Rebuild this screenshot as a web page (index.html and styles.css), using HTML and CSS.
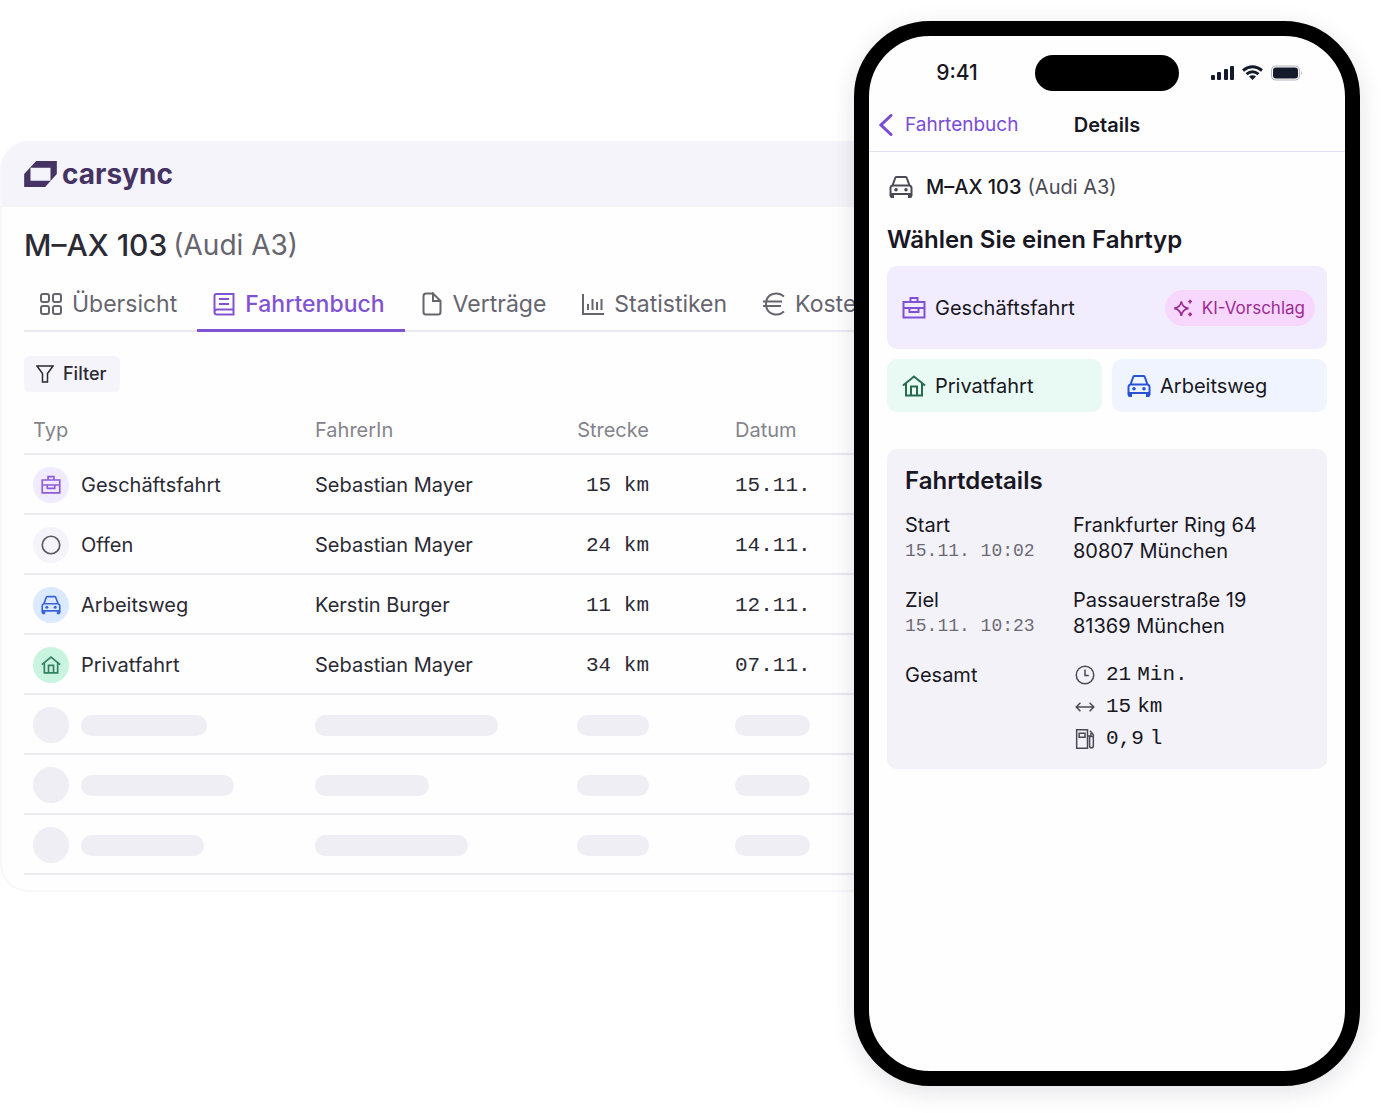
FILE: index.html
```html
<!DOCTYPE html>
<html lang="de">
<head>
<meta charset="utf-8">
<meta name="viewport" content="width=device-width, initial-scale=1">
<title>carsync Fahrtenbuch</title>
<link rel="stylesheet" href="styles.css">
</head>
<body>
<svg class="sprite" aria-hidden="true">
  <symbol id="grid" viewBox="0 0 24 24"><rect x="2" y="2" width="8" height="8" rx="2"/><rect x="14" y="2" width="8" height="8" rx="2"/><rect x="2" y="14" width="8" height="8" rx="2"/><rect x="14" y="14" width="8" height="8" rx="2"/></symbol>
  <symbol id="book" viewBox="0 0 24 24"><path d="M21.500 17.500V2H4.500Q2.500 2 2.500 4V20Q2.500 22.500 5 22.500H21.500V17.500H5Q2.500 17.500 2.500 20M7 7H17M7 12H17"/></symbol>
  <symbol id="file" viewBox="0 0 24 24"><path d="M13 1.500H6Q3.500 1.500 3.500 4V20Q3.500 22.500 6 22.500H18Q20.500 22.500 20.500 20V9L13 1.500V9H20.500"/></symbol>
  <symbol id="chart" viewBox="0 0 24 24"><path d="M2 2V22H23M7 18V12M11.500 18V7M16 18V10M20.500 18V7"/></symbol>
  <symbol id="euro" viewBox="0 0 24 24"><path d="M22 4.500C16 -1 4 1 4 12S16 25 22 19.500M1 9.500H20M1 14H19"/></symbol>
  <symbol id="funnel" viewBox="0 0 18 18"><path d="M1 1H17L11.500 8.500V17H6.500V8.500Z"/></symbol>
  <symbol id="briefcase" viewBox="0 0 24 24"><path d="M1.500 6H22.500V21.500H1.500ZM8.500 6V2H15.500V6M1.500 12H22.500M7.500 12V16H16.500V12"/></symbol>
  <symbol id="car" viewBox="0 0 24 24"><path d="M1.500 21V13Q1.500 11 3.500 10.500L6 3.500Q6.300 2 7.500 2H16.500Q17.700 2 18 3.500L20.500 10.500Q22.500 11 22.500 13V21M3 10.500H21M1.500 19H22.500"/><path class="fill" d="M1 19H5V23H2.500Q1 23 1 21.500ZM19 19H23V21.500Q23 23 21.500 23H19Z"/><circle class="fill" cx="7" cy="14.800" r="1.800"/><circle class="fill" cx="17" cy="14.800" r="1.800"/></symbol>
  <symbol id="home" viewBox="0 0 24 24"><path d="M1 11.500L12 2.500L23 11.500M4 9.500V21.500H20V9.500M9 21.500V12.500H15V21.500"/></symbol>
  <symbol id="ring" viewBox="0 0 24 24"><circle cx="12" cy="12" r="10.500"/></symbol>
  <symbol id="spark" viewBox="0 0 24 24"><path d="M10 4Q11 11 18.500 12.500Q11 14 10 21.500Q9 14 1.500 12.500Q9 11 10 4Z"/><path d="M20.500 2V6.500M18.300 4.200H22.800M20.500 17.500V22M18.300 19.700H22.800"/></symbol>
  <symbol id="clock" viewBox="0 0 24 24"><circle cx="12" cy="12" r="10.500"/><path d="M12 5.500V12.500H16.500"/></symbol>
  <symbol id="span" viewBox="0 0 24 24"><path d="M2 12H22M6.500 7L1.500 12L6.500 17M17.500 7L22.500 12L17.500 17"/></symbol>
  <symbol id="pump" viewBox="0 0 24 24"><path d="M2 1H15V23H2ZM5 5H12V10H5ZM15 8.500H17.500V20Q17.500 22.500 19.700 22.500Q22 22.500 22 20V7L18 2M22 9H19V5"/></symbol>
  <symbol id="back" viewBox="0 0 14 22"><path d="M12 1.500L2 11L12 20.500"/></symbol>
</svg>

<main class="stage">
  <section class="window">
    <header class="brand">
      <svg class="brand-mark" viewBox="0 0 98 78" aria-hidden="true"><path fill-rule="evenodd" d="M0 78V39L36 0H98V39L63 78ZM19 20V59H79V20Z"/></svg>
      <span class="brand-name">carsync</span>
    </header>
    <div class="window-body">
      <h1 class="title"><strong>M–AX 103</strong><span>(Audi A3)</span></h1>
      <nav class="tabs">
        <a class="tab" href="#uebersicht"><svg class="icon"><use href="#grid"/></svg>Übersicht</a>
        <a class="tab active" href="#fahrtenbuch"><svg class="icon"><use href="#book"/></svg>Fahrtenbuch</a>
        <a class="tab" href="#vertraege"><svg class="icon"><use href="#file"/></svg>Verträge</a>
        <a class="tab" href="#statistiken"><svg class="icon"><use href="#chart"/></svg>Statistiken</a>
        <a class="tab" href="#kosten"><svg class="icon"><use href="#euro"/></svg>Kosten</a>
      </nav>
      <button class="filter" type="button"><svg class="icon"><use href="#funnel"/></svg>Filter</button>
      <table class="trips">
        <thead>
          <tr><th class="col-type">Typ</th><th class="col-driver">FahrerIn</th><th class="col-distance">Strecke</th><th>Datum</th></tr>
        </thead>
        <tbody>
          <tr><td><span class="type"><span class="dot business"><svg class="icon"><use href="#briefcase"/></svg></span>Geschäftsfahrt</span></td><td>Sebastian Mayer</td><td class="mono">15 km</td><td class="mono">15.11.</td></tr>
          <tr><td><span class="type"><span class="dot open"><svg class="icon"><use href="#ring"/></svg></span>Offen</span></td><td>Sebastian Mayer</td><td class="mono">24 km</td><td class="mono">14.11.</td></tr>
          <tr><td><span class="type"><span class="dot commute"><svg class="icon"><use href="#car"/></svg></span>Arbeitsweg</span></td><td>Kerstin Burger</td><td class="mono">11 km</td><td class="mono">12.11.</td></tr>
          <tr><td><span class="type"><span class="dot private"><svg class="icon"><use href="#home"/></svg></span>Privatfahrt</span></td><td>Sebastian Mayer</td><td class="mono">34 km</td><td class="mono">07.11.</td></tr>
          <tr><td><span class="type"><span class="dot empty"></span><span class="bar" style="width:126px"></span></span></td><td><span class="bar" style="width:183px"></span></td><td><span class="bar bar-end" style="width:72px"></span></td><td><span class="bar" style="width:75px"></span></td></tr>
          <tr><td><span class="type"><span class="dot empty"></span><span class="bar" style="width:153px"></span></span></td><td><span class="bar" style="width:114px"></span></td><td><span class="bar bar-end" style="width:72px"></span></td><td><span class="bar" style="width:75px"></span></td></tr>
          <tr><td><span class="type"><span class="dot empty"></span><span class="bar" style="width:123px"></span></span></td><td><span class="bar" style="width:153px"></span></td><td><span class="bar bar-end" style="width:72px"></span></td><td><span class="bar" style="width:75px"></span></td></tr>
        </tbody>
      </table>
    </div>
  </section>

  <section class="phone">
    <div class="status">
      <span class="time">9:41</span>
      <span class="island"></span>
      <span class="signals">
        <svg width="92" height="18" viewBox="0 0 92 18" aria-hidden="true">
          <rect x="0" y="11" width="4" height="5" rx="1"/><rect x="6" y="8" width="4" height="8" rx="1"/><rect x="13" y="5" width="4" height="11" rx="1"/><rect x="19" y="2" width="4" height="14" rx="1"/>
          <path class="wave" d="M32 6.500Q41.500 -1 51 6.500M35.500 10.200Q41.500 5.300 47.500 10.200"/><path d="M38 12.500Q41.500 9.800 45 12.500L41.500 16Z"/>
          <rect class="shell" x="60.500" y="2" width="28" height="14" rx="4"/><rect x="62" y="3.500" width="25" height="11" rx="3"/><path class="nub" d="M90 7Q92 9 90 11Z"/>
        </svg>
      </span>
    </div>
    <nav class="phone-nav">
      <a class="back" href="#liste"><svg class="chevron"><use href="#back"/></svg>Fahrtenbuch</a>
      <h2 class="nav-title">Details</h2>
    </nav>
    <div class="phone-body">
      <p class="vehicle"><svg class="icon"><use href="#car"/></svg><span class="vehicle-name"><strong>M–AX 103</strong><span>(Audi A3)</span></span></p>
      <h3 class="heading">Wählen Sie einen Fahrtyp</h3>
      <div class="choices">
        <button class="choice choice-business" type="button"><svg class="icon"><use href="#briefcase"/></svg>Geschäftsfahrt<span class="badge"><svg class="icon"><use href="#spark"/></svg>KI-Vorschlag</span></button>
        <button class="choice choice-private" type="button"><svg class="icon"><use href="#home"/></svg>Privatfahrt</button>
        <button class="choice choice-commute" type="button"><svg class="icon"><use href="#car"/></svg>Arbeitsweg</button>
      </div>
      <section class="details">
        <h3 class="heading">Fahrtdetails</h3>
        <dl class="facts">
          <dt>Start<time class="mono">15.11. 10:02</time></dt>
          <dd>Frankfurter Ring 64<br>80807 München</dd>
          <dt>Ziel<time class="mono">15.11. 10:23</time></dt>
          <dd>Passauerstraße 19<br>81369 München</dd>
          <dt>Gesamt</dt>
          <dd class="totals">
            <span class="total mono"><svg class="icon"><use href="#clock"/></svg><span>21</span><span>Min.</span></span>
            <span class="total mono"><svg class="icon"><use href="#span"/></svg><span>15</span><span>km</span></span>
            <span class="total mono"><svg class="icon"><use href="#pump"/></svg><span>0,9</span><span>l</span></span>
          </dd>
        </dl>
      </section>
    </div>
  </section>
</main>
</body>
</html>
```
FILE: styles.css
```css
* { box-sizing: border-box; }

body {
  margin: 0;
  background: #fff;
  color: #2b2a35;
  font-family: Inter, "Liberation Sans", sans-serif;
  font-size: 20px;
  line-height: 26px;
}

h1, h2, h3, p, dl, dd { margin: 0; }
a { color: inherit; text-decoration: none; }
button { border: 0; font: inherit; color: inherit; text-align: left; }
strong { font-weight: 500; }

.sprite { display: none; }
.icon {
  flex: none;
  width: 24px;
  height: 24px;
  fill: none;
  stroke: currentColor;
  stroke-width: 2;
}
.fill { fill: currentColor; stroke: none; }
.mono { font-family: "Liberation Mono", monospace; font-size: 21px; }

.stage {
  display: grid;
  grid-template-columns: minmax(0, 1fr) 506px;
  min-height: 100vh;
  padding: 21px 25px 27px 0;
}

/* Desktop window, runs behind the phone's left edge */
.window {
  align-self: start;
  margin: 120px -40px 0 0;
  overflow: hidden;
  border: 1px solid #f7f6fb;
  border-width: 0 0 2px 2px;
  border-radius: 28px 0 0 28px;
  background: #fefefe;
}
.brand {
  display: flex;
  align-items: center;
  gap: 5px;
  height: 66px;
  padding-left: 22px;
  background: #f5f4fa;
  color: #453363;
}
.brand-mark { width: 33px; height: 26px; fill: currentColor; }
.brand-name { font-size: 28px; font-weight: 700; }
.window-body { padding: 20px 0 15px 22px; }

.title {
  display: flex;
  gap: 6px;
  font-size: 30px;
  font-weight: 400;
  line-height: 36px;
}
.title span { color: #66656e; font-size: 28px; }

.tabs {
  display: flex;
  margin-top: 16px;
  border-bottom: 2px solid #e9e9f1;
  color: #66656e;
  font-size: 23px;
  white-space: nowrap;
}
.tab {
  display: flex;
  align-items: center;
  gap: 9px;
  height: 53px;
  margin-bottom: -2px;
  padding: 0 20px 0 15px;
  border-bottom: 3px solid transparent;
}
.tab.active { border-color: #8153d3; color: #8153d3; font-weight: 500; }

.filter {
  display: flex;
  align-items: center;
  gap: 9px;
  height: 36px;
  margin-top: 24px;
  padding: 0 14px 0 12px;
  border-radius: 6px;
  background: #f5f4fa;
  font-size: 18px;
  font-weight: 500;
}
.filter .icon { width: 18px; height: 18px; stroke-width: 1.5; }

.trips {
  width: 100%;
  margin-top: 13px;
  border-collapse: collapse;
  table-layout: fixed;
}
.trips tr { height: 60px; border-bottom: 2px solid #e9e9f0; }
.trips thead tr { height: 49px; }
.trips th { color: #84848c; font-weight: 400; text-align: left; }
.trips th, .trips td { padding: 2px 0 0 9px; }
.col-type { width: 282px; }
.col-driver { width: 220px; }
.col-distance { width: 200px; }
.trips th:nth-child(3), .trips td:nth-child(3) { padding-right: 77px; text-align: right; }
.trips .mono { padding-top: 4px; }

.type { display: flex; align-items: center; gap: 12px; }
.dot {
  display: grid;
  place-items: center;
  width: 36px;
  height: 36px;
  border-radius: 50%;
}
.dot .icon { width: 20px; height: 20px; }
.business { background: #f0ebfe; color: #8d5bdd; }
.open { background: #f5f4fa; color: #5a5963; }
.commute { background: #dbeafe; color: #3b63dd; }
.private { background: #c9f5e0; color: #357f62; }
.empty { background: #efeef5; }
.bar {
  display: block;
  height: 21px;
  border-radius: 11px;
  background: #efeef5;
}
.bar-end { margin-left: auto; }

/* Phone */
.phone {
  z-index: 1;
  border: 15px solid #000;
  border-radius: 76px;
  background: #fefefe;
  box-shadow: 0 6px 24px rgba(30, 20, 40, 0.12);
  color: #181723;
}
.status {
  display: grid;
  grid-template-columns: 1fr 144px 1fr;
  align-items: center;
  padding-top: 19px;
}
.time { padding-left: 10px; font-size: 21px; font-weight: 500; text-align: center; }
.island { height: 36px; border-radius: 18px; background: #000; }
.signals { display: flex; justify-content: center; padding-right: 10px; fill: #151a2c; }
.wave { fill: none; stroke: #151a2c; stroke-width: 3; }
.shell { fill: none; stroke: #b5b6bd; }
.nub { fill: #b5b6bd; }

.phone-nav {
  display: grid;
  grid-template-columns: 1fr auto 1fr;
  align-items: center;
  height: 61px;
  padding: 7px 10px 0;
  border-bottom: 1px solid #e5e2f0;
}
.back { display: flex; align-items: center; gap: 12px; color: #7a4bd6; font-size: 19px; }
.chevron { width: 14px; height: 22px; fill: none; stroke: currentColor; stroke-width: 3; stroke-linecap: round; }
.nav-title { font-size: 20px; font-weight: 600; line-height: 26px; }

.phone-body { padding: 22px 18px; }
.vehicle { display: flex; align-items: center; gap: 13px; padding-left: 2px; color: #4a4955; }
.vehicle-name { display: flex; gap: 6px; }
.vehicle strong { color: #181723; }
.heading { font-size: 24px; font-weight: 600; line-height: 28px; }
.vehicle + .heading { margin-top: 26px; }

.choices {
  display: grid;
  grid-template-columns: 1fr 1fr;
  gap: 10px;
  margin-top: 12px;
}
.choice {
  display: flex;
  align-items: center;
  gap: 9px;
  height: 53px;
  padding: 0 12px 0 15px;
  border-radius: 10px;
}
.choice-business { grid-column: 1 / -1; height: 83px; background: #f1ecfe; }
.choice-business > .icon { color: #7f4fd8; }
.choice-private { background: #e9faf4; }
.choice-private > .icon { color: #266b50; }
.choice-commute { background: #eff4ff; }
.choice-commute > .icon { color: #2953d6; }
.badge {
  display: flex;
  align-items: center;
  gap: 9px;
  height: 36px;
  margin-left: auto;
  padding: 0 10px 0 8px;
  border-radius: 18px;
  background: #f7d7fd;
  color: #9c2c91;
  font-size: 17px;
}
.badge .icon { width: 20px; height: 20px; }

.details {
  margin-top: 37px;
  padding: 18px 18px 17px;
  border-radius: 10px;
  background: #f3f2f9;
}
.facts {
  display: grid;
  grid-template-columns: 168px 1fr;
  row-gap: 23px;
  margin-top: 17px;
}
.facts time { display: block; color: #6b6a74; font-size: 18px; }
.totals { display: grid; gap: 6px; }
.total { display: flex; align-items: center; gap: 6px; }
.total .icon { width: 20px; height: 20px; margin: 0 5px 0 2px; color: #4a4955; stroke-width: 1.8; }
```
